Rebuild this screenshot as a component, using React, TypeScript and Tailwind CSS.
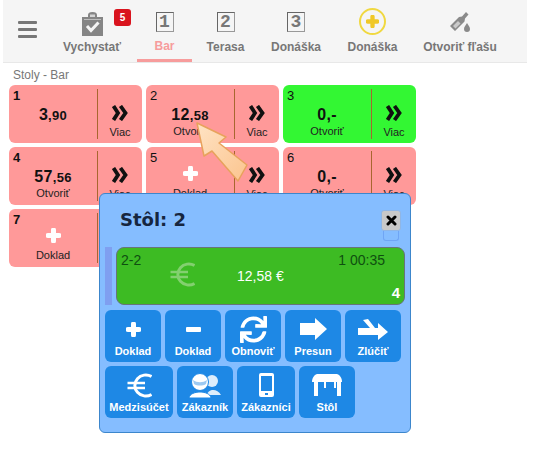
import type { ReactNode } from "react";
import { FaSync } from "react-icons/fa";

const font = "font-['Liberation_Sans',Arial,sans-serif]";

function Chevrons() {
  return (
    <svg width="16" height="16" viewBox="0 0 16 16" className="block">
      <path d="M1.5 1 L6 8 L1.5 15 M8.5 1 L13.5 8 L8.5 15" fill="none" stroke="#111" strokeWidth="3.8" />
    </svg>
  );
}

function Plus({ size = 15, color = "#fff" }: { size?: number; color?: string }) {
  return (
    <svg width={size} height={size} viewBox="0 0 15 15" className="block">
      <path d="M7.5 2 V13 M2 7.5 H13" stroke={color} strokeWidth="5" strokeLinecap="round" />
    </svg>
  );
}

function Euro({ color = "#fff" }: { color?: string }) {
  return (
    <svg width="25" height="25" viewBox="0 0 25 25" className="block">
      <path d="M24.5 3.5 A11 10.5 0 1 0 24.5 21.5" fill="none" stroke={color} strokeWidth="3" />
      <path d="M0.5 10 H18 M0.5 15 H18" stroke={color} strokeWidth="2.4" />
    </svg>
  );
}

function NumberIcon({ n }: { n: number }) {
  return (
    <div className="flex h-[20px] w-[18px] items-center justify-center border border-[#999] border-t-[#666] border-l-[#666] font-['Liberation_Mono',monospace] text-[18px] font-bold leading-none text-[#777]">
      {n}
    </div>
  );
}

function ClipboardIcon() {
  return (
    <svg width="21" height="24" viewBox="0 0 21 24" className="block">
      <path d="M0 5 H6 V3 A4.5 3 0 0 1 15 3 V5 H21 V24 H0 Z" fill="#858585" />
      <rect x="8" y="2.5" width="5" height="2.5" fill="#f5f5f5" opacity="0.7" />
      <rect x="2" y="7" width="17" height="1" fill="#f5f5f5" opacity="0.5" />
      <path d="M5 14 L9 18.5 L16.5 10.5" fill="none" stroke="#f5f5f5" strokeWidth="3" />
    </svg>
  );
}

function BottleIcon() {
  return (
    <svg width="21" height="21" viewBox="0 0 21 21" className="block">
      <path d="M0 14 L9 5 L12 4.5 L16 0 L18.5 2.5 L15 6.5 L14.5 9.5 L5 19 Z" fill="#8a8a8a" />
      <path d="M3 14 L8 9 L10.5 11.5 L5.5 16.5 Z" fill="#f5f5f5" opacity="0.6" />
      <path d="M17 11 C18.5 13.5 20 15 20 17 A3 3 0 0 1 14 17 C14 15 15.5 13.5 17 11 Z" fill="#8a8a8a" />
    </svg>
  );
}

function NavItem({ icon, label, active, width }: { icon: ReactNode; label: string; active?: boolean; width: string }) {
  return (
    <div className={`flex h-full shrink-0 flex-col items-center pt-[12px] ${width}`}>
      <div className="flex h-[26px] items-start justify-center">{icon}</div>
      <div className={`mt-[2px] text-[12px] font-bold leading-[14px] whitespace-nowrap ${active ? "text-[#f79c9c]" : "text-[#777]"}`}>
        {label}
      </div>
      {active && <div className="mt-[6px] h-[3px] w-[55px] bg-[#f79c9c]" />}
    </div>
  );
}

function Amount({ whole, dec }: { whole: string; dec?: string }) {
  return (
    <div className="text-[16px] font-bold leading-[18px] tracking-[0.3px] text-[#111]">
      {whole}
      {dec && <span className="text-[13px]">,{dec}</span>}
    </div>
  );
}

function TableCard({ n, green, children, label }: { n: number; green?: boolean; children: ReactNode; label?: string }) {
  return (
    <div className={`flex h-[58px] w-[133px] rounded-[6px] ${green ? "bg-[#33f733]" : "bg-[#ff9999]"}`}>
      <div className="relative flex w-[88px] flex-col items-center pt-[20px]">
        <span className={`absolute left-[4px] top-[3px] text-[13px] leading-[15px] text-[#111] ${n % 3 === 1 ? "font-bold" : ""}`}>{n}</span>
        <div className="flex h-[20px] items-center">{children}</div>
        <div className="text-[11px] leading-[13px] text-[#222]">{label}</div>
      </div>
      <div className="my-[4px] flex flex-1 flex-col items-center justify-end border-l border-[#a8662f]">
        <div className="mb-[5px]">
          <Chevrons />
        </div>
        <div className="text-[11px] leading-[13px] text-[#222]">Viac</div>
      </div>
    </div>
  );
}

function ActionButton({ icon, label, width = "w-[56px]" }: { icon: ReactNode; label: string; width?: string }) {
  return (
    <div className={`flex h-[52px] shrink-0 flex-col items-center rounded-[6px] bg-[#1e88e5] ${width}`}>
      <div className="flex h-[35px] items-center justify-center pt-[3px]">{icon}</div>
      <div className="text-[11px] font-bold leading-[13px] text-white whitespace-nowrap">{label}</div>
    </div>
  );
}

export default function App() {
  return (
    <div className={`relative h-[456px] w-[536px] overflow-hidden bg-white ${font}`}>
      <div className="ml-[3px] flex h-[63px] w-[524px] items-stretch border-b border-[#e8e8e8] bg-[#f5f5f5]">
        <div className="flex w-[49px] shrink-0 flex-col gap-[4px] pl-[15px] pt-[21px]">
          <div className="h-[3px] w-[19px] rounded-[1px] bg-[#777]" />
          <div className="h-[3px] w-[19px] rounded-[1px] bg-[#777]" />
          <div className="h-[3px] w-[19px] rounded-[1px] bg-[#777]" />
        </div>
        <div className="relative">
          <NavItem width="w-[80px]" icon={<ClipboardIcon />} label="Vychystať" />
          <div className="absolute left-[62px] top-[9px] flex h-[17px] w-[17px] items-center justify-center rounded-[3px] bg-[#d9141e] text-[10px] font-bold text-white">
            5
          </div>
        </div>
        <NavItem width="w-[65px]" active icon={<NumberIcon n={1} />} label="Bar" />
        <NavItem width="w-[57px]" icon={<NumberIcon n={2} />} label="Terasa" />
        <NavItem width="w-[84px]" icon={<NumberIcon n={3} />} label="Donáška" />
        <NavItem
          width="w-[69px]"
          icon={
            <div className="-mt-[4px] flex h-[27px] w-[27px] items-center justify-center rounded-full border-[2px] border-[#f0d840]">
              <Plus size={13} color="#f0c828" />
            </div>
          }
          label="Donáška"
        />
        <NavItem width="w-[106px]" icon={<BottleIcon />} label="Otvoriť fľašu" />
      </div>

      <div className="px-[13px] pt-[5px] text-[12px] leading-[14px] text-[#777]">Stoly - Bar</div>

      <div className="mt-[3px] ml-[9px] grid w-[407px] grid-cols-[133px_133px_133px] gap-[4px]">
        <TableCard n={1}>
          <Amount whole="3" dec="90" />
        </TableCard>
        <TableCard n={2} label="Otvoriť">
          <Amount whole="12" dec="58" />
        </TableCard>
        <TableCard n={3} green label="Otvoriť">
          <Amount whole="0,-" />
        </TableCard>
        <TableCard n={4} label="Otvoriť">
          <Amount whole="57" dec="56" />
        </TableCard>
        <TableCard n={5} label="Doklad">
          <div className="mb-[8px]">
            <Plus />
          </div>
        </TableCard>
        <TableCard n={6} label="Otvoriť">
          <Amount whole="0,-" />
        </TableCard>
        <TableCard n={7} label="Doklad">
          <div className="mb-[8px]">
            <Plus />
          </div>
        </TableCard>
      </div>

      <svg width="64" height="64" viewBox="0 0 64 64" className="absolute left-[194px] top-[121px]">
        <defs>
          <linearGradient id="arrowFill" x1="0" y1="0" x2="1" y2="1">
            <stop offset="0" stopColor="#ffe3c4" />
            <stop offset="1" stopColor="#fbc48e" />
          </linearGradient>
        </defs>
        <path
          d="M3 2 L32 16 L25 22 L53 44 L44 60 L18 30 L10 35 Z"
          fill="url(#arrowFill)"
          stroke="#e8a25c"
          strokeWidth="1.5"
          strokeLinejoin="round"
        />
      </svg>

      <div className="absolute left-[99px] top-[193px] h-[240px] w-[312px] rounded-[6px] border border-[#3c86cc] bg-[#85bdff]">
        <div className="absolute left-[20px] top-[15px] font-['DejaVu_Sans',sans-serif] text-[18px] font-bold leading-[22px] text-[#16263f]">
          Stôl: 2
        </div>
        <div className="absolute left-[283px] top-[36px] h-[11px] w-[16px] rounded-b-[3px] border border-t-0 border-[#6fa5f5]" />
        <div className="absolute left-[281px] top-[16px] flex h-[21px] w-[20px] items-center justify-center rounded-[3px] border border-[#8fb6e6] bg-[#c8c8c8]">
          <svg width="11" height="11" viewBox="0 0 11 11" className="block">
            <path d="M2 2 L9 9 M9 2 L2 9" stroke="#000" strokeWidth="3" strokeLinecap="round" />
          </svg>
        </div>

        <div className="absolute left-[5px] top-[53px] flex w-[300px] items-stretch gap-[4px]">
          <div className="h-[58px] w-[7px] bg-[#7f9ff0]" />
          <div className="relative h-[58px] flex-1 rounded-[8px] border border-[#67757a] bg-[#3dbb23] text-[14px] leading-[16px]">
            <span className="absolute left-[4px] top-[4px] text-[#0f4f10]">2-2</span>
            <span className="absolute left-[53px] top-[14px]">
              <Euro color="#83d06f" />
            </span>
            <span className="absolute left-[120px] top-[20px] text-white">12,58 €</span>
            <span className="absolute right-[19px] top-[4px] text-[#0f4f10]">1 00:35</span>
            <span className="absolute right-[4px] bottom-[3px] text-[15px] font-bold text-white">4</span>
          </div>
        </div>

        <div className="absolute left-[5px] top-[116px] flex flex-col gap-[4px]">
          <div className="flex gap-[4px]">
            <ActionButton icon={<Plus />} label="Doklad" />
            <ActionButton
              icon={
                <svg width="15" height="5" viewBox="0 0 15 5" className="block">
                  <rect width="15" height="5" rx="1" fill="#fff" />
                </svg>
              }
              label="Doklad"
            />
            <ActionButton icon={<FaSync size={27} color="#fff" />} label="Obnoviť" />
            <ActionButton
              icon={
                <svg width="27" height="22" viewBox="0 0 27 22" className="block">
                  <path d="M0 5 H15 V0 L27 11 L15 22 V17 H0 Z" fill="#fff" />
                </svg>
              }
              label="Presun"
            />
            <ActionButton
              icon={
                <svg width="30" height="21" viewBox="0 0 30 21" className="block">
                  <path d="M0 9 H12 L5 1 L10 0 L17 9 H20 V4 L30 13 L20 21 V16 H0 Z" fill="#fff" />
                </svg>
              }
              label="Zlúčiť"
            />
          </div>
          <div className="flex gap-[4px]">
            <ActionButton width="w-[68px]" icon={<Euro />} label="Medzisúčet" />
            <ActionButton
              icon={
                <svg width="32" height="25" viewBox="0 0 32 25" className="block">
                  <circle cx="23" cy="8" r="6" fill="#fff" opacity="0.85" />
                  <path d="M18 22 C19 16 28 15 32 22 Z" fill="#fff" opacity="0.85" />
                  <circle cx="11" cy="9" r="8.5" fill="#fff" stroke="#1e88e5" />
                  <path d="M4 7 C8 10 14 10 18 7 L17 11 C14 13 8 13 5 11 Z" fill="#9cc9f2" />
                  <path d="M0 25 C1 17 21 17 22 25 Z" fill="#fff" stroke="#1e88e5" />
                </svg>
              }
              label="Zákazník"
            />
            <ActionButton
              width="w-[58px]"
              icon={
                <svg width="15" height="24" viewBox="0 0 15 24" className="block">
                  <path
                    fillRule="evenodd"
                    d="M2 0 H13 A2 2 0 0 1 15 2 V22 A2 2 0 0 1 13 24 H2 A2 2 0 0 1 0 22 V2 A2 2 0 0 1 2 0 Z M2 3 V18 H13 V3 Z M6 20 V22 H9 V20 Z"
                    fill="#fff"
                  />
                </svg>
              }
              label="Zákazníci"
            />
            <ActionButton
              icon={
                <svg width="30" height="22" viewBox="0 0 30 22" className="block">
                  <path d="M5 0 H25 C28 1 30 4 30 8 H0 C0 4 2 1 5 0 Z" fill="#fff" />
                  <rect x="2" y="8" width="4" height="14" fill="#fff" />
                  <rect x="25" y="8" width="4" height="14" fill="#fff" />
                  <rect x="12" y="8" width="2" height="6" fill="#fff" />
                  <rect x="22" y="8" width="2" height="6" fill="#fff" />
                </svg>
              }
              label="Stôl"
            />
          </div>
        </div>
      </div>
    </div>
  );
}
